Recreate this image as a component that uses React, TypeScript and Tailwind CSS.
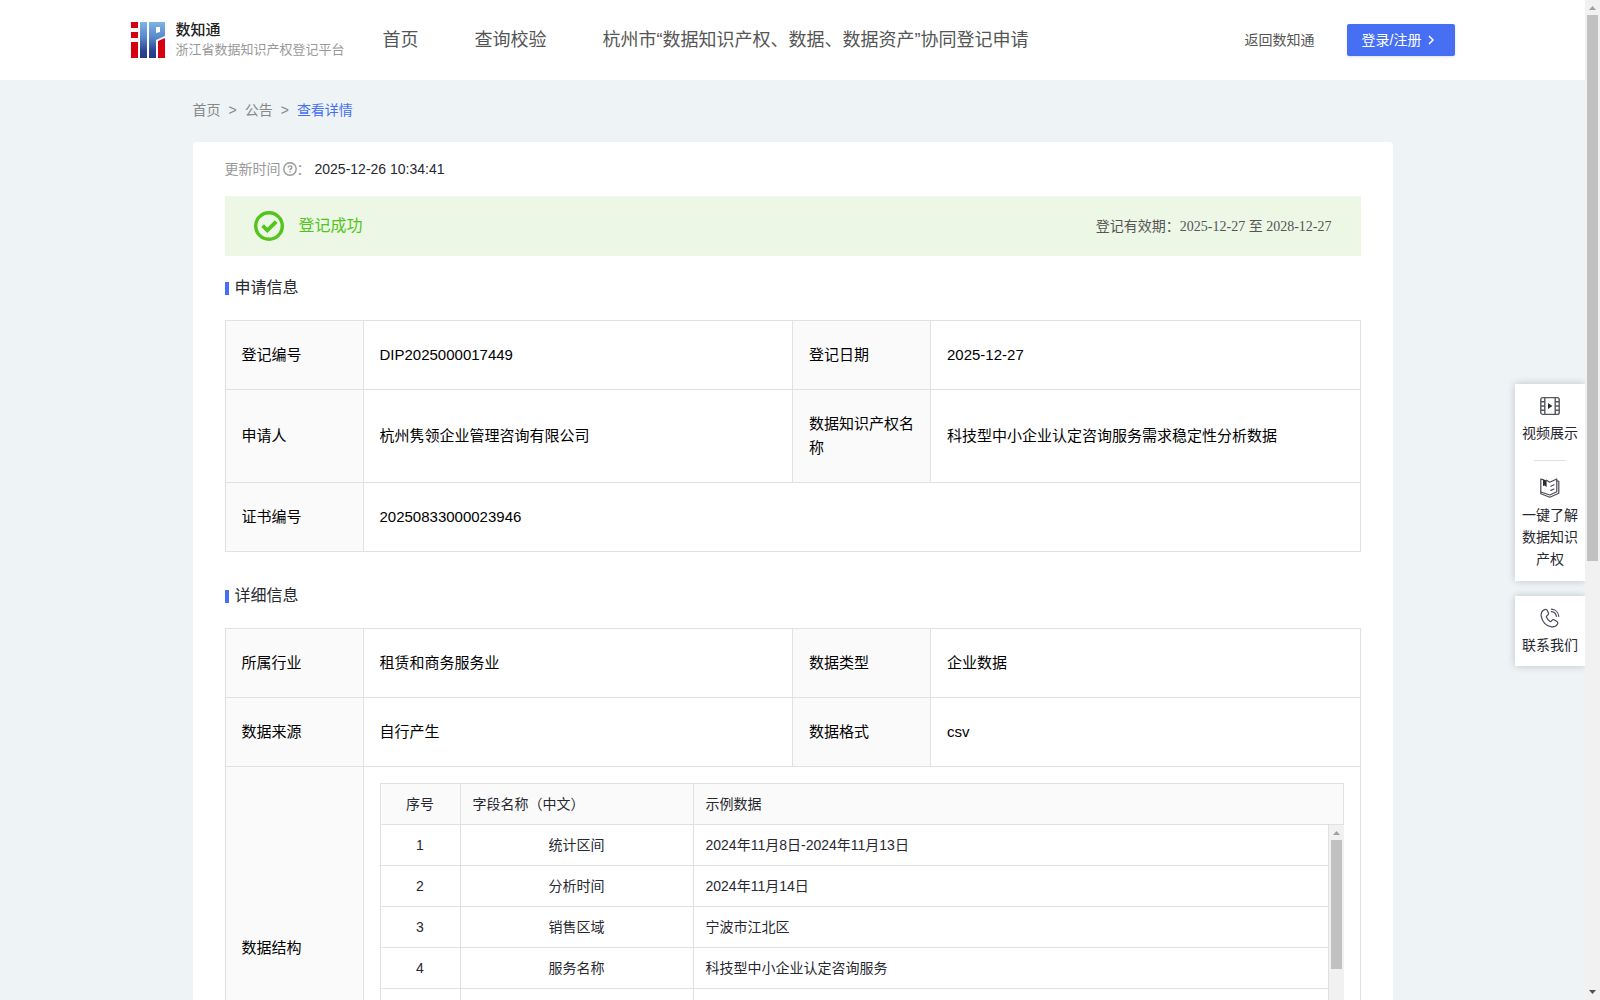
import type { ReactNode } from 'react';

const SANS = "font-['Liberation_Sans','Noto_Sans_CJK_SC',sans-serif]";

interface Field {
  label: string;
  value: ReactNode;
}

const navLinks = ['首页', '查询校验', '杭州市“数据知识产权、数据、数据资产”协同登记申请'];

const applyRows: Field[][] = [
  [{ label: '登记编号', value: 'DIP2025000017449' }, { label: '登记日期', value: '2025-12-27' }],
  [
    { label: '申请人', value: '杭州隽领企业管理咨询有限公司' },
    { label: '数据知识产权名称', value: '科技型中小企业认定咨询服务需求稳定性分析数据' },
  ],
  [{ label: '证书编号', value: '20250833000023946' }],
];

const structure = [
  ['1', '统计区间', '2024年11月8日-2024年11月13日'],
  ['2', '分析时间', '2024年11月14日'],
  ['3', '销售区域', '宁波市江北区'],
  ['4', '服务名称', '科技型中小企业认定咨询服务'],
  ['', '', ''],
];

function Logo() {
  return (
    <svg width="34" height="36" viewBox="0 0 34 36" aria-hidden="true">
      <defs>
        <linearGradient id="logo-blue" gradientUnits="userSpaceOnUse" x1="0" y1="0" x2="0" y2="36">
          <stop offset="0" stopColor="#7fb4e6" />
          <stop offset="0.45" stopColor="#5585c8" />
          <stop offset="0.8" stopColor="#2c4590" />
          <stop offset="1" stopColor="#253a85" />
        </linearGradient>
      </defs>
      <path fill="#d7000f" d="M0 0h7v6H0zM0 10h7v6H0zM0 20h7v16H0zM27 19l7-3v20h-7z" />
      <path fill="url(#logo-blue)" fillRule="evenodd" d="M9 0h7v36H9zM18 0h16v14l-9 4v18h-7zM25 5v6l4-1V5z" />
    </svg>
  );
}

function VideoIcon() {
  return (
    <svg width="20" height="20" viewBox="0 0 20 20" fill="none" stroke="#55575e" strokeWidth="1.4" aria-hidden="true">
      <rect x="0.8" y="1.6" width="18.4" height="16.8" rx="2" />
      <path d="M4.8 1.6v16.8M15.2 1.6v16.8M0.8 5.8h4M0.8 10h4M0.8 14.2h4M15.2 5.8h4M15.2 10h4M15.2 14.2h4" />
      <path d="M8 7v6l4.4-3z" fill="#2b2d35" stroke="none" />
    </svg>
  );
}

function BookIcon() {
  return (
    <svg width="20" height="20" viewBox="0 0 20 20" fill="none" stroke="#4b4d55" strokeWidth="1.2" strokeLinejoin="round" strokeLinecap="round" aria-hidden="true">
      <path d="M6.6 2.2l3 2L16.800 1v12.800l-7 3.200L.8 14V1l2.200.6" />
      <path d="M.8 14v1.800l9 3.400 9-4V3.400l-2-.6" />
      <path d="M10.800 8.200l3.200-1.400M10.800 12.400l3.200-1.400" />
      <path d="M3 1.200l3.600 1.400v6.600L4.800 7.600 3 8z" fill="#2b2d35" stroke="none" />
    </svg>
  );
}

function PhoneIcon() {
  return (
    <svg width="20" height="20" viewBox="0 0 20 20" fill="none" stroke="#4b4d55" strokeWidth="1.2" strokeLinecap="round" strokeLinejoin="round" aria-hidden="true">
      <path d="M4.6 1.6C2 2.8.8 5.4 1.2 8.2c.8 5.400 5 10 10.200 10.600 2.800.3 5-.8 6-2.600.7-1.200.3-2.400-.8-3l-2.200-1.300c-1-.6-1.900-.3-2.500.5l-.6.7c-.4.500-.9.600-1.500.200-1.500-1-2.700-2.500-3.400-4.200-.2-.6 0-1 .5-1.400l.8-.6c.8-.6 1-1.400.6-2.300l-1-2.300c-.5-1.100-1.600-1.400-2.700-.9z" />
      <path d="M11.400 1.200c4 .2 7 3.200 7.400 7.200M11.400 3.600c2.800.2 4.600 2 5 4.800" />
    </svg>
  );
}

function SuccessIcon() {
  return (
    <svg width="30" height="30" viewBox="0 0 30 30" fill="none" stroke="#52c41a" aria-hidden="true">
      <circle cx="15" cy="15" r="13.3" strokeWidth="3.4" />
      <path d="M8.6 14.6l4.8 4.800 8.800-8.800" strokeWidth="3.8" />
    </svg>
  );
}

function ScrollBar({ thumb }: { thumb: string }) {
  return (
    <div className="flex w-[15px] shrink-0 flex-col items-center bg-[#f1f1f1]" aria-hidden="true">
      <svg width="15" height="15" className="shrink-0"><path d="M4 10h7L7.5 6z" fill="#a0a0a0" /></svg>
      <div className="flex w-[11px] min-h-0 flex-1 flex-col">
        <div className={`bg-[#c1c1c1] ${thumb}`} />
      </div>
      <svg width="15" height="15" className="shrink-0"><path d="M4 5h7L7.5 9z" fill="#505050" /></svg>
    </div>
  );
}

function SectionTitle({ children }: { children: ReactNode }) {
  return (
    <h2 className="mb-5 flex items-center gap-1.5 text-base leading-6 text-[#272831]">
      <span className="h-[13px] w-1 bg-[#466ff4]" />
      {children}
    </h2>
  );
}

function InfoTable({ rows, children }: { rows: Field[][]; children?: ReactNode }) {
  return (
    <table className="w-full table-fixed border-separate border-spacing-0 border-l border-t border-[#e1e1e1] text-[15px] leading-6 text-black">
      <colgroup>
        <col className="w-[138px]" />
        <col />
        <col className="w-[138px]" />
        <col />
      </colgroup>
      <tbody>
        {rows.map((row, i) => (
          <tr key={i}>
            {row.map(field => [
              <th key={field.label} scope="row" className="border-b border-r border-[#e1e1e1] bg-[#fafafa] px-4 py-[22px] text-left font-normal">
                {field.label}
              </th>,
              <td key={field.label + '-value'} colSpan={row.length === 1 ? 3 : 1} className="border-b border-r border-[#e1e1e1] px-4 py-[22px]">
                {field.value}
              </td>,
            ])}
          </tr>
        ))}
        {children}
      </tbody>
    </table>
  );
}

function StructureTable() {
  const cell = 'h-[41px] border-b border-r border-[#e1e1e1] px-3';
  const cols = (
    <colgroup>
      <col className="w-20" />
      <col className="w-[233px]" />
      <col />
    </colgroup>
  );
  return (
    <div className="text-sm text-[#272831]">
      <table className="w-full table-fixed border-separate border-spacing-0 border-l border-t border-[#e1e1e1] bg-[#fafafa]">
        {cols}
        <thead>
          <tr>
            <th className={`${cell} text-center font-normal`}>序号</th>
            <th className={`${cell} text-left font-normal`}>字段名称（中文）</th>
            <th className={`${cell} text-left font-normal`}>示例数据</th>
          </tr>
        </thead>
      </table>
      <div className="flex h-72 overflow-hidden border-l border-[#e1e1e1]">
        <div className="min-w-0 flex-1">
          <table className="w-full table-fixed border-separate border-spacing-0">
            {cols}
            <tbody>
              {structure.map(([no, name, sample], i) => (
                <tr key={i}>
                  <td className={`${cell} text-center`}>{no}</td>
                  <td className={`${cell} text-center`}>{name}</td>
                  <td className={cell}>{sample}</td>
                </tr>
              ))}
            </tbody>
          </table>
        </div>
        <ScrollBar thumb="h-1/2" />
      </div>
    </div>
  );
}

function SideLink({ icon, children }: { icon: ReactNode; children: ReactNode }) {
  return (
    <a href="#" className="flex flex-col items-center gap-1.5 text-center text-sm leading-[22px] text-[#272831]">
      {icon}
      <span>{children}</span>
    </a>
  );
}

export default function App() {
  return (
    <div className={`flex h-screen overflow-hidden bg-[#eef3f6] ${SANS}`}>
      <div className="relative min-w-0 flex-1 overflow-hidden">
        <header className="bg-white">
          <div className="mx-auto flex h-20 max-w-[1324px] items-center">
            <a href="#" className="flex w-56 shrink-0 items-center gap-[11px]">
              <Logo />
              <span className="flex flex-col whitespace-nowrap">
                <span className="text-[15px] font-medium leading-5 text-[#222]">数知通</span>
                <span className="text-[13px] leading-5 text-[#999]">浙江省数据知识产权登记平台</span>
              </span>
            </a>
            <nav className="ml-7 flex flex-1 gap-14 whitespace-nowrap text-lg leading-7 text-[#555]">
              {navLinks.map(text => <a key={text} href="#">{text}</a>)}
            </nav>
            <a href="#" className="mr-8 text-sm text-[#555]">返回数知通</a>
            <button type="button" className="flex h-8 w-[108px] items-center gap-1.5 rounded-xs bg-[#466ff4] pl-[15px] text-sm text-white shadow-sm">
              登录/注册
              <svg width="8" height="10" viewBox="0 0 8 10" fill="none" stroke="currentColor" strokeWidth="1.5" aria-hidden="true">
                <path d="M2 1l4 4-4 4" />
              </svg>
            </button>
          </div>
        </header>

        <main className="mx-auto max-w-[1200px]">
          <nav className="flex h-[62px] items-center gap-2 pb-0.5 text-sm text-[#888]">
            <a href="#">首页</a>
            <span>&gt;</span>
            <a href="#">公告</a>
            <span>&gt;</span>
            <a href="#" className="text-[#466ff4]">查看详情</a>
          </nav>

          <div className="rounded-sm bg-white px-8 py-4">
            <div className="mb-4 flex items-center text-sm leading-[22px]">
              <span className="text-[#999]">更新时间</span>
              <svg width="14" height="14" viewBox="0 0 14 14" fill="none" stroke="#999" strokeWidth="1.4" className="ml-0.5" aria-hidden="true">
                <circle cx="7" cy="7" r="6.2" />
                <path d="M5.2 5.6c0-2.400 3.700-2.300 3.700-.1 0 1.300-1.900 1.400-1.900 2.700M7 9.300v1.200" />
              </svg>
              <span className="text-[#999]">：</span>
              <span className="ml-1 text-[#272831]">2025-12-26 10:34:41</span>
            </div>

            <div className="flex h-[60px] items-center justify-between bg-[#ecf7e6] px-[29px]">
              <div className="flex items-center gap-[15px] text-base text-[#52c41a]">
                <SuccessIcon />
                登记成功
              </div>
              <div className="text-sm text-[#555]">
                登记有效期：
                <span className="font-['Liberation_Serif','Noto_Sans_CJK_SC',serif]">2025-12-27 至 2028-12-27</span>
              </div>
            </div>

            <section className="mt-5">
              <SectionTitle>申请信息</SectionTitle>
              <InfoTable rows={applyRows} />
            </section>

            <section className="mt-8">
              <SectionTitle>详细信息</SectionTitle>
              <InfoTable
                rows={[
                  [{ label: '所属行业', value: '租赁和商务服务业' }, { label: '数据类型', value: '企业数据' }],
                  [{ label: '数据来源', value: '自行产生' }, { label: '数据格式', value: 'csv' }],
                ]}
              >
                <tr>
                  <th scope="row" className="border-b border-r border-[#e1e1e1] bg-[#fafafa] px-4 text-left font-normal">数据结构</th>
                  <td colSpan={3} className="border-b border-r border-[#e1e1e1] p-4">
                    <StructureTable />
                  </td>
                </tr>
              </InfoTable>
            </section>
          </div>
        </main>

        {/* floating shortcuts */}
        <aside className="absolute right-0 top-96 flex w-[70px] flex-col gap-[15px]">
          <div className="flex flex-col items-center bg-white px-1.5 pb-[11px] pt-3 shadow-[0_0_8px_rgba(0,0,0,0.2)]">
            <SideLink icon={<VideoIcon />}>视频展示</SideLink>
            <div className="mb-[17px] mt-4 h-px w-8 bg-[#e1e1e1]" />
            <SideLink icon={<BookIcon />}>一键了解数据知识产权</SideLink>
          </div>
          <div className="flex flex-col items-center bg-white px-1.5 pb-2.5 pt-3 shadow-[0_0_8px_rgba(0,0,0,0.2)]">
            <SideLink icon={<PhoneIcon />}>联系我们</SideLink>
          </div>
        </aside>
      </div>
      <ScrollBar thumb="h-[56.3%]" />
    </div>
  );
}
